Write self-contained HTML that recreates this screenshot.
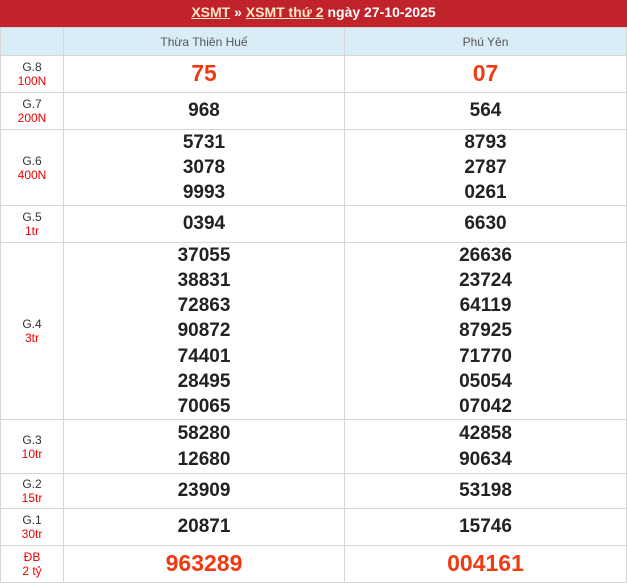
<!DOCTYPE html>
<html><head><meta charset="utf-8"><style>
*{margin:0;padding:0;box-sizing:border-box}
body{width:627px;height:577px;overflow:hidden;background:#fff;font-family:"Liberation Sans",sans-serif}
.hd{position:absolute;left:0;top:0;width:627px;height:27px;background:#c1232b;color:#fff;font-weight:bold;font-size:14px;text-align:center;line-height:25px}
.hd u{color:#ffe7c0}
table{position:absolute;left:0;top:27px;border-collapse:collapse;width:627px}
td{border:1px solid #d6d6d6;text-align:center;vertical-align:middle;padding:0}
th{border:1px solid #d6d6d6;background:#d9edf7;color:#555;font-weight:normal;font-size:12px;height:28px}
td.l{width:63px;font-size:12px;color:#333;line-height:14px}
td.l span{color:#e00;display:block}
td.n{font-weight:bold;font-size:19px;color:#222;line-height:25.3px}
td.r{color:#f03a10;font-size:23px}
</style></head><body>
<div class="hd"><u>XSMT</u> » <u>XSMT thứ 2</u> ngày 27-10-2025</div>
<table>
<tr><th style="width:63px"></th><th style="width:281px">Thừa Thiên Huế</th><th>Phú Yên</th></tr>
<tr style="height:37px"><td class="l">G.8<span>100N</span></td><td class="n r">75</td><td class="n r">07</td></tr>
<tr style="height:37px"><td class="l">G.7<span>200N</span></td><td class="n">968</td><td class="n">564</td></tr>
<tr style="height:76px"><td class="l">G.6<span>400N</span></td><td class="n" style="line-height:25px">5731<br>3078<br>9993</td><td class="n" style="line-height:25px">8793<br>2787<br>0261</td></tr>
<tr style="height:37px"><td class="l">G.5<span>1tr</span></td><td class="n">0394</td><td class="n">6630</td></tr>
<tr style="height:177px"><td class="l">G.4<span>3tr</span></td><td class="n" style="line-height:25.1px">37055<br>38831<br>72863<br>90872<br>74401<br>28495<br>70065</td><td class="n" style="line-height:25.1px">26636<br>23724<br>64119<br>87925<br>71770<br>05054<br>07042</td></tr>
<tr style="height:54px"><td class="l">G.3<span>10tr</span></td><td class="n">58280<br>12680</td><td class="n">42858<br>90634</td></tr>
<tr style="height:35px"><td class="l">G.2<span>15tr</span></td><td class="n">23909</td><td class="n">53198</td></tr>
<tr style="height:37px"><td class="l">G.1<span>30tr</span></td><td class="n">20871</td><td class="n">15746</td></tr>
<tr style="height:37px"><td class="l" style="color:#e00">ĐB<span>2 tỷ</span></td><td class="n r">963289</td><td class="n r">004161</td></tr>
</table>
</body></html>
